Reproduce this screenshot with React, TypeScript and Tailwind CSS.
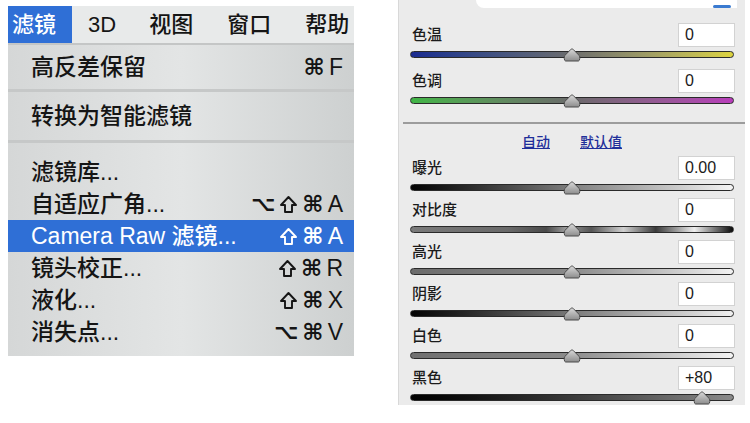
import React from "react";

const CJK = "font-['Helvetica_Neue','Liberation_Sans','Noto_Sans_CJK_SC',sans-serif]";
const SYM = "font-['DejaVu_Sans','Liberation_Sans',sans-serif]";

type MenuItem = { label: string; keys?: string; active?: boolean };

const menuItems: MenuItem[] = [
  { label: "滤镜库..." },
  { label: "自适应广角...", keys: "⌥⇧⌘A" },
  { label: "Camera Raw 滤镜...", keys: "⇧⌘A", active: true },
  { label: "镜头校正...", keys: "⇧⌘R" },
  { label: "液化...", keys: "⇧⌘X" },
  { label: "消失点...", keys: "⌥⌘V" },
];

function ShiftIcon() {
  return (
    <svg width="19" height="19" viewBox="0 0 19 19" className="block">
      <path
        d="M9.5 2 L17 10 L13 10 L13 17 L6 17 L6 10 L2 10 Z"
        fill="none"
        stroke="currentColor"
        strokeWidth="1.9"
        strokeLinejoin="round"
      />
    </svg>
  );
}

function Keys({ k }: { k: string }) {
  // modifier glyphs drawn separately, final letter in the text face
  const mods = k.slice(0, -1).split("");
  const last = k.slice(-1);
  return (
    <span className="flex items-center gap-[4px]">
      {mods.map((m, i) =>
        m === "⇧" ? (
          <ShiftIcon key={i} />
        ) : (
          <span key={i} className={`${SYM} font-bold ${m === "⌘" ? "text-[23px]" : "text-[21px]"} leading-none`}>
            {m}
          </span>
        )
      )}
      <span className="text-[23px] leading-none">{last}</span>
    </span>
  );
}

function FilterMenu() {
  return (
    <div className={`mt-[6px] ml-[8px] w-[346px] h-[350px] flex flex-col bg-gradient-to-r from-[#d5d7d7] via-[#e3e5e5] to-[#cdd0d0] text-[#151515] font-medium ${CJK}`}>
      <div className="h-[39px] flex items-center bg-[#e8eaea] text-[22px] border-b-2 border-[#c4c6c6]">
        <span className="h-full w-[64px] bg-[#2f6fd6] text-white flex items-center pl-[4px]">滤镜</span>
        <span className="ml-[16px]">3D</span>
        <span className="ml-[33px]">视图</span>
        <span className="ml-[34px]">窗口</span>
        <span className="ml-[34px]">帮助</span>
      </div>
      <div className="h-[44px] flex items-center justify-between pl-[23px] pr-[11px] text-[23px]">
        <span>高反差保留</span>
        <Keys k="⌘F" />
      </div>
      <div className="h-[3px] bg-[#c6c8c8]" />
      <div className="h-[48px] flex items-center pl-[23px] text-[23px]">转换为智能滤镜</div>
      <div className="h-[3px] bg-[#c6c8c8]" />
      <div className="pt-[13px] flex flex-col">
        {menuItems.map((it) => (
          <div
            key={it.label}
            className={`h-[32px] flex items-center justify-between pl-[23px] pr-[11px] text-[23px] ${
              it.active ? "bg-[#2f6fd6] text-white" : ""
            }`}
          >
            <span>{it.label}</span>
            {it.keys && <Keys k={it.keys} />}
          </div>
        ))}
      </div>
    </div>
  );
}

function Thumb() {
  return (
    <svg width="18" height="14" viewBox="0 0 18 14" className="block">
      <defs>
        <linearGradient id="tg" x1="0" y1="0" x2="0" y2="1">
          <stop offset="0" stopColor="#d8d8d8" />
          <stop offset="1" stopColor="#8c8c8c" />
        </linearGradient>
      </defs>
      <path
        d="M9 1 C9.9 1 10.5 1.6 11.2 2.5 L16.3 7.6 C17.2 8.6 16.9 13 15.4 13 L2.6 13 C1.1 13 0.8 8.6 1.7 7.6 L6.8 2.5 C7.5 1.6 8.1 1 9 1 Z"
        fill="url(#tg)"
        stroke="#4a4a4a"
        strokeWidth="1"
      />
    </svg>
  );
}

type Row = { label: string; value: string; track: string; pos: number };

function Slider({ track, pos }: { track: string; pos: number }) {
  return (
    <div className="relative h-[14px] mx-[11px] flex items-center">
      <div className={`w-full h-[7px] rounded-full border-[1.5px] border-[#2a2a2a] ${track}`} />
      <div className="absolute top-[1px] -translate-x-1/2" style={{ left: `${pos}%` }}>
        <Thumb />
      </div>
    </div>
  );
}

function ValueRow({ label, value }: { label: string; value: string }) {
  return (
    <div className="h-[24px] flex items-center justify-between pl-[13px] pr-[10px]">
      <span className="text-[15px] font-medium text-[#1b1b1b]">{label}</span>
      <div className="w-[57px] h-[24px] bg-white border border-[#d2d2d2] flex items-center pl-[6px] text-[16px] text-[#1b1b1b] font-['Liberation_Sans',sans-serif]">
        {value}
      </div>
    </div>
  );
}

const colorRows: Row[] = [
  { label: "色温", value: "0", track: "bg-gradient-to-r from-[#1b2a90] via-[#6d6d6d] to-[#dcd33e]", pos: 50 },
  { label: "色调", value: "0", track: "bg-gradient-to-r from-[#3fb545] via-[#6a6a6a] to-[#b83cba]", pos: 50 },
];

const toneRows: Row[] = [
  { label: "曝光", value: "0.00", track: "bg-gradient-to-r from-[#050505] via-[#808080] to-[#f4f4f4]", pos: 50 },
  {
    label: "对比度",
    value: "0",
    track: "bg-[linear-gradient(to_right,#7a7a7a_0%,#6a6a6a_30%,#4a4a4a_42%,#9a9a9a_48%,#555_56%,#cfcfcf_66%,#3a3a3a_76%,#eeeeee_88%,#0a0a0a_100%)]",
    pos: 50,
  },
  { label: "高光", value: "0", track: "bg-gradient-to-r from-[#6c6c6c] via-[#8a8a8a] to-[#f2f2f2]", pos: 50 },
  { label: "阴影", value: "0", track: "bg-gradient-to-r from-[#050505] via-[#7a7a7a] to-[#f0f0f0]", pos: 50 },
  { label: "白色", value: "0", track: "bg-gradient-to-r from-[#707070] via-[#8c8c8c] to-[#f4f4f4]", pos: 50 },
  { label: "黑色", value: "+80", track: "bg-gradient-to-r from-[#020202] via-[#3a3a3a] to-[#8a8a8a]", pos: 90 },
];

function CameraRawPanel() {
  return (
    <div className={`ml-auto mr-[5px] w-[347px] h-[405px] bg-[#ebebeb] border-l border-[#d8d8d8] flex flex-col ${CJK}`}>
      <div className="h-[8px] ml-[77px] mr-[8px] bg-white rounded-bl-[10px] flex justify-end items-end pr-[6px]">
        <div className="w-[18px] h-[3px] bg-[#3a7ad0] rounded-full" />
      </div>
      <div className="mt-[15px] flex flex-col gap-[8px]">
        {colorRows.map((r) => (
          <div key={r.label} className="flex flex-col">
            <ValueRow label={r.label} value={r.value} />
            <Slider track={r.track} pos={r.pos} />
          </div>
        ))}
      </div>
      <div className="mt-[15px] ml-[4px] h-[2px] bg-[#9c9c9c]" />
      <div className="h-[22px] mt-[8px] flex justify-center gap-[30px] text-[14px] font-medium text-[#1f2f9a] underline">
        <span>自动</span>
        <span>默认值</span>
      </div>
      <div className="mt-[2px] flex flex-col gap-[4px]">
        {toneRows.map((r) => (
          <div key={r.label} className="flex flex-col">
            <ValueRow label={r.label} value={r.value} />
            <Slider track={r.track} pos={r.pos} />
          </div>
        ))}
      </div>
    </div>
  );
}

export default function App() {
  return (
    <div className="w-[750px] h-[423px] bg-white flex items-start overflow-hidden">
      <FilterMenu />
      <CameraRawPanel />
    </div>
  );
}
